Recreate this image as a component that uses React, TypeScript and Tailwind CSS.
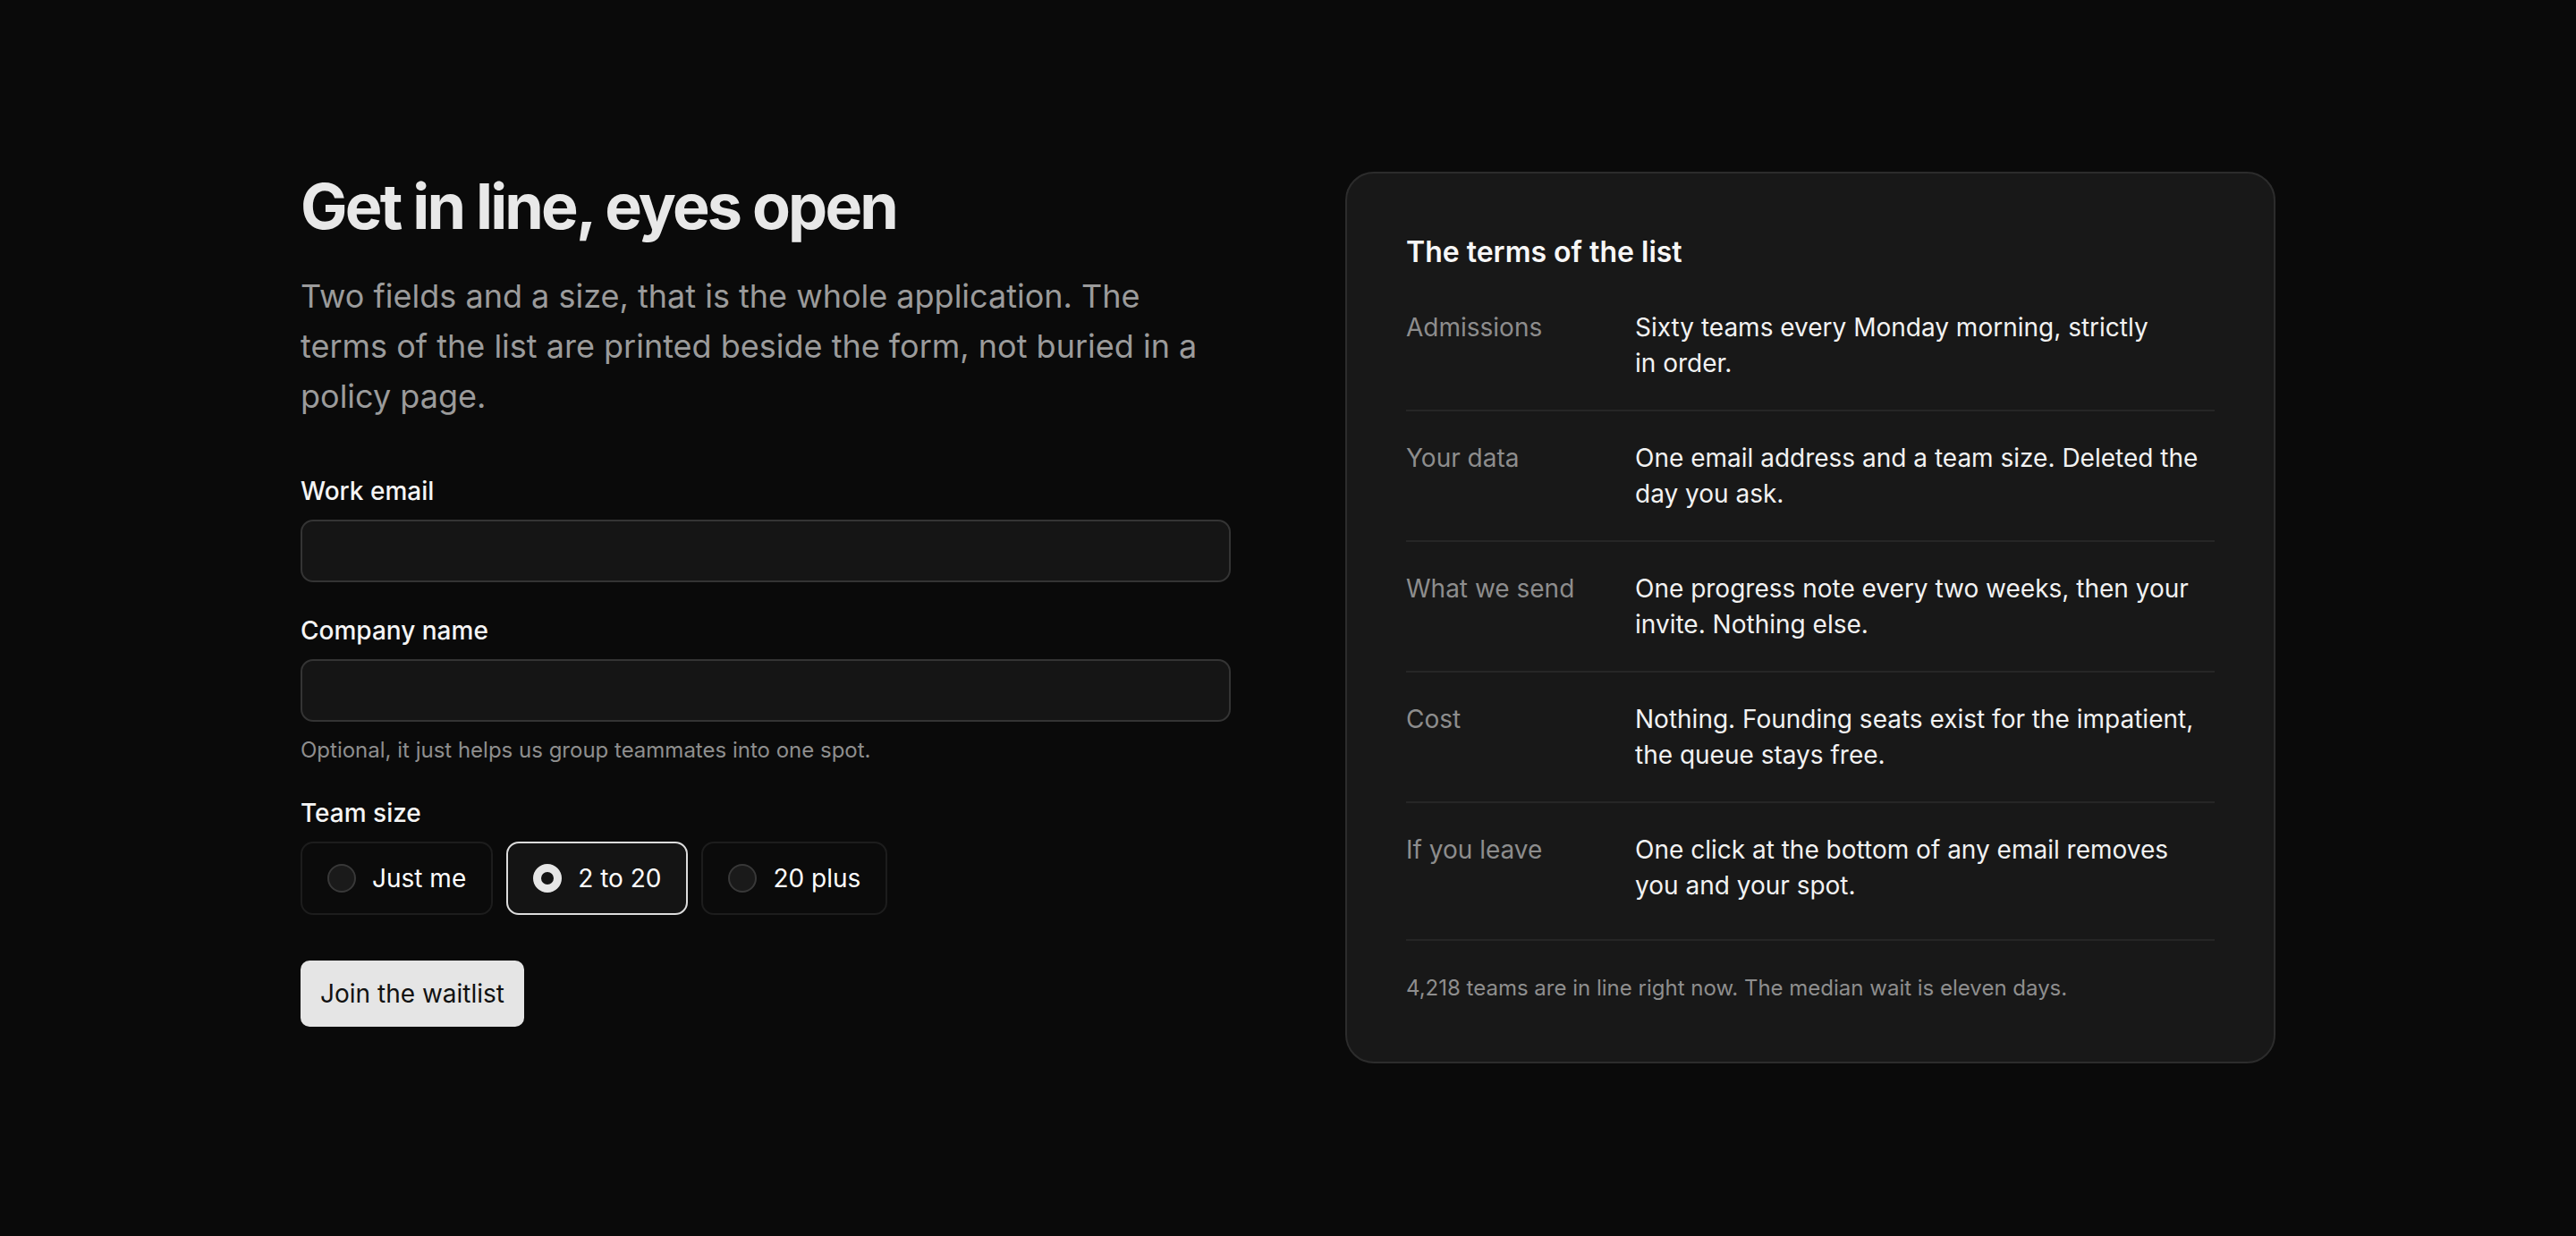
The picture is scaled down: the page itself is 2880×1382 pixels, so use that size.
import React, { useState } from 'react';

interface Term {
  label: string;
  text: string;
}

const terms: Term[] = [
  { label: 'Admissions', text: 'Sixty teams every Monday morning, strictly in order.' },
  { label: 'Your data', text: 'One email address and a team size. Deleted the day you ask.' },
  { label: 'What we send', text: 'One progress note every two weeks, then your invite. Nothing else.' },
  { label: 'Cost', text: 'Nothing. Founding seats exist for the impatient, the queue stays free.' },
  { label: 'If you leave', text: 'One click at the bottom of any email removes you and your spot.' },
];

const sizes = ['Just me', '2 to 20', '20 plus'];

const App: React.FC = () => {
  const [email, setEmail] = useState('');
  const [company, setCompany] = useState('');
  const [size, setSize] = useState('2 to 20');

  return (
    <div className="min-h-screen bg-[#0a0a0a] font-['Inter',sans-serif] text-[#f2f2f2] antialiased">
      <div className="mx-auto grid max-w-[2208px] grid-cols-2 gap-[128px] py-[192px]">
        <div>
          <h1 className="text-[70px] leading-[77px] font-bold tracking-[-0.04em] text-[#e8e8e8]">
            Get in line, eyes open
          </h1>
          <p className="mt-[34px] max-w-[1020px] text-[36px] leading-[56px] text-[#9b9b9b]">
            Two fields and a size, that is the whole application. The terms of the list are printed
            beside the form, not buried in a policy page.
          </p>

          <form className="mt-[58px] flex flex-col gap-[34px]" onSubmit={(e) => e.preventDefault()}>
            <div>
              <label className="mb-3 block text-[28px] leading-[40px] font-medium text-[#f5f5f5]">
                Work email
              </label>
              <input
                type="email"
                value={email}
                onChange={(e) => setEmail(e.target.value)}
                className="h-[70px] w-full rounded-[14px] border-2 border-[#343434] bg-[#151515] px-5 text-[28px] text-white outline-none"
              />
            </div>

            <div>
              <label className="mb-3 block text-[28px] leading-[40px] font-medium text-[#f5f5f5]">
                Company name
              </label>
              <input
                type="text"
                value={company}
                onChange={(e) => setCompany(e.target.value)}
                className="h-[70px] w-full rounded-[14px] border-2 border-[#343434] bg-[#151515] px-5 text-[28px] text-white outline-none"
              />
              <p className="mt-4 text-[24px] leading-[32px] text-[#8e8e8e]">
                Optional, it just helps us group teammates into one spot.
              </p>
            </div>

            <div>
              <div className="mb-3 text-[28px] leading-[40px] font-medium text-[#f5f5f5]">Team size</div>
              <div className="flex gap-[15px]">
                {sizes.map((s) => {
                  const active = s === size;
                  return (
                    <button
                      key={s}
                      type="button"
                      onClick={() => setSize(s)}
                      className={
                        active
                          ? 'flex h-[82px] items-center gap-[18px] rounded-[14px] border-2 border-[#dcdcdc] bg-[#141414] px-7 text-[28px] leading-[40px] text-white'
                          : 'flex h-[82px] items-center gap-[18px] rounded-[14px] border-2 border-[#1d1d1d] bg-[#0b0b0b] px-7 text-[28px] leading-[40px] text-white'
                      }
                    >
                      <span
                        className={
                          active
                            ? 'h-8 w-8 rounded-full border-[9px] border-[#e6e6e6] bg-[#141414]'
                            : 'h-8 w-8 rounded-full border-2 border-[#383838] bg-[#1a1a1a]'
                        }
                      />
                      {s}
                    </button>
                  );
                })}
              </div>
            </div>

            <div>
              <button
                type="submit"
                className="mt-[17px] rounded-[10px] bg-[#e5e5e5] px-[22px] py-[17px] text-[28px] leading-[40px] text-[#111111]"
              >
                Join the waitlist
              </button>
            </div>
          </form>
        </div>

        <div className="self-start rounded-[32px] border-2 border-[#2c2c2c] bg-[#181818] p-[66px]">
          <h2 className="mb-[10px] text-[32px] leading-[44px] font-semibold text-[#f7f7f7]">
            The terms of the list
          </h2>
          <dl className="divide-y-2 divide-[#262626]">
            {terms.map((t) => (
              <div key={t.label} className="grid grid-cols-[256px_1fr] py-8 text-[28px] leading-[40px]">
                <dt className="text-[#8d8d8d]">{t.label}</dt>
                <dd className="text-pretty text-[#f2f2f2]">{t.text}</dd>
              </div>
            ))}
          </dl>
          <p className="mt-2 border-t-2 border-[#262626] pt-[37px] text-[24px] leading-[32px] text-[#8e8e8e]">
            4,218 teams are in line right now. The median wait is eleven days.
          </p>
        </div>
      </div>
    </div>
  );
};

export default App;
